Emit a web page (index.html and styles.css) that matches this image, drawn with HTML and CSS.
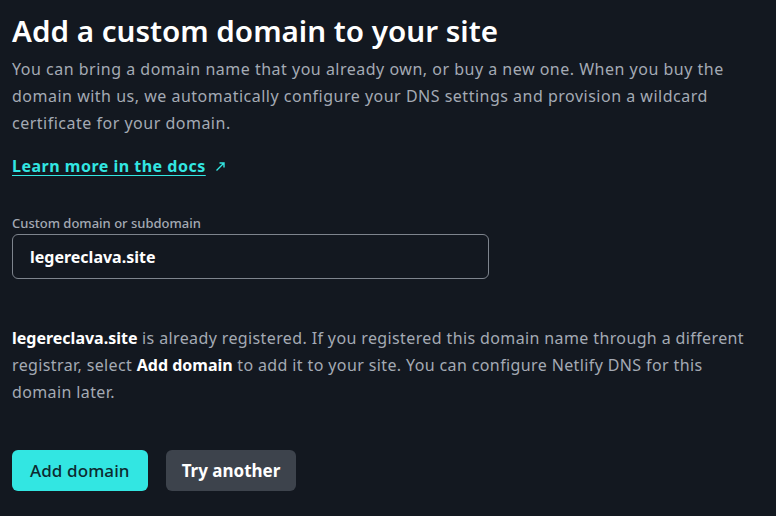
FILE: index.html
```html
<!DOCTYPE html>
<html>
<head>
<meta charset="utf-8">
<link rel="stylesheet" href="styles.css">
</head>
<body>
<main class="page">
  <h1 class="title">Add a custom domain to your site</h1>
  <p class="lead">You can bring a domain name that you already own, or buy a new one. When you buy the domain with us, we automatically configure your DNS settings and provision a wildcard certificate for your domain.</p>
  <p class="docs"><a class="docs-link" href="#">Learn more in the docs</a><span class="arrow">
    <svg width="11" height="11" viewBox="0 0 11 11"><path d="M1.5 9.5 L9 2 M4.5 2 H9 V6.5" fill="none" stroke="#32e6e2" stroke-width="1.4"/></svg></span></p>
  <div class="field">
    <label class="label">Custom domain or subdomain</label>
    <div class="input">legereclava.site</div>
  </div>
  <p class="message"><strong>legereclava.site</strong> is already registered. If you registered this domain name through a different registrar, select <strong>Add domain</strong> to add it to your site. You can configure Netlify DNS for this domain later.</p>
  <div class="actions">
    <button class="btn btn-primary">Add domain</button>
    <button class="btn btn-secondary">Try another</button>
  </div>
</main>
</body>
</html>
```
FILE: styles.css
```css
html, body {
  margin: 0;
  padding: 0;
  background: #131820;
}
body {
  font-family: "Noto Sans", "Open Sans", sans-serif;
  color: #a4aab4;
}
.page {
  padding: 10px 12px 0 12px;
}
.title {
  margin: 0 0 4px 0;
  font-size: 29.6px;
  line-height: 42px;
  font-weight: 600;
  color: #ffffff;
}
.lead {
  margin: 0;
  font-size: 16px;
  line-height: 27px;
  letter-spacing: 0.5px;
}
.docs {
  margin: 16px 0 0 0;
  line-height: 27px;
  font-size: 16px;
}
.docs-link {
  color: #32e6e2;
  font-weight: 700;
  letter-spacing: 0.5px;
  text-decoration: underline;
  text-underline-offset: 3px;
}
.arrow {
  margin-left: 5px;
}
.field {
  margin-top: 34px;
}
.label {
  display: block;
  font-size: 13px;
  line-height: 18px;
  font-weight: 500;
  color: #a4aab4;
}
.input {
  margin-top: 2px;
  width: 477px;
  box-sizing: border-box;
  height: 45px;
  border: 1px solid #7e848d;
  border-radius: 6px;
  padding: 0 17px;
  display: flex;
  align-items: center;
  font-size: 16px;
  font-weight: 700;
  color: #ffffff;
}
.message {
  margin: 46px 0 0 0;
  font-size: 16px;
  line-height: 27px;
  letter-spacing: 0.38px;
}
.message strong {
  color: #ffffff;
  font-weight: 700;
  letter-spacing: 0;
}
.actions {
  margin-top: 44px;
  display: flex;
  gap: 18px;
}
.btn {
  font-family: inherit;
  height: 41px;
  border: none;
  border-radius: 6px;
  font-size: 17px;
  padding: 0 18px;
}
.btn-primary {
  background: #32e6e2;
  color: #0d2a30;
  font-weight: 500;
  letter-spacing: 0.1px;
}
.btn-secondary {
  background: #3d434c;
  color: #ffffff;
  font-weight: 700;
  padding: 0 16px;
}
```
